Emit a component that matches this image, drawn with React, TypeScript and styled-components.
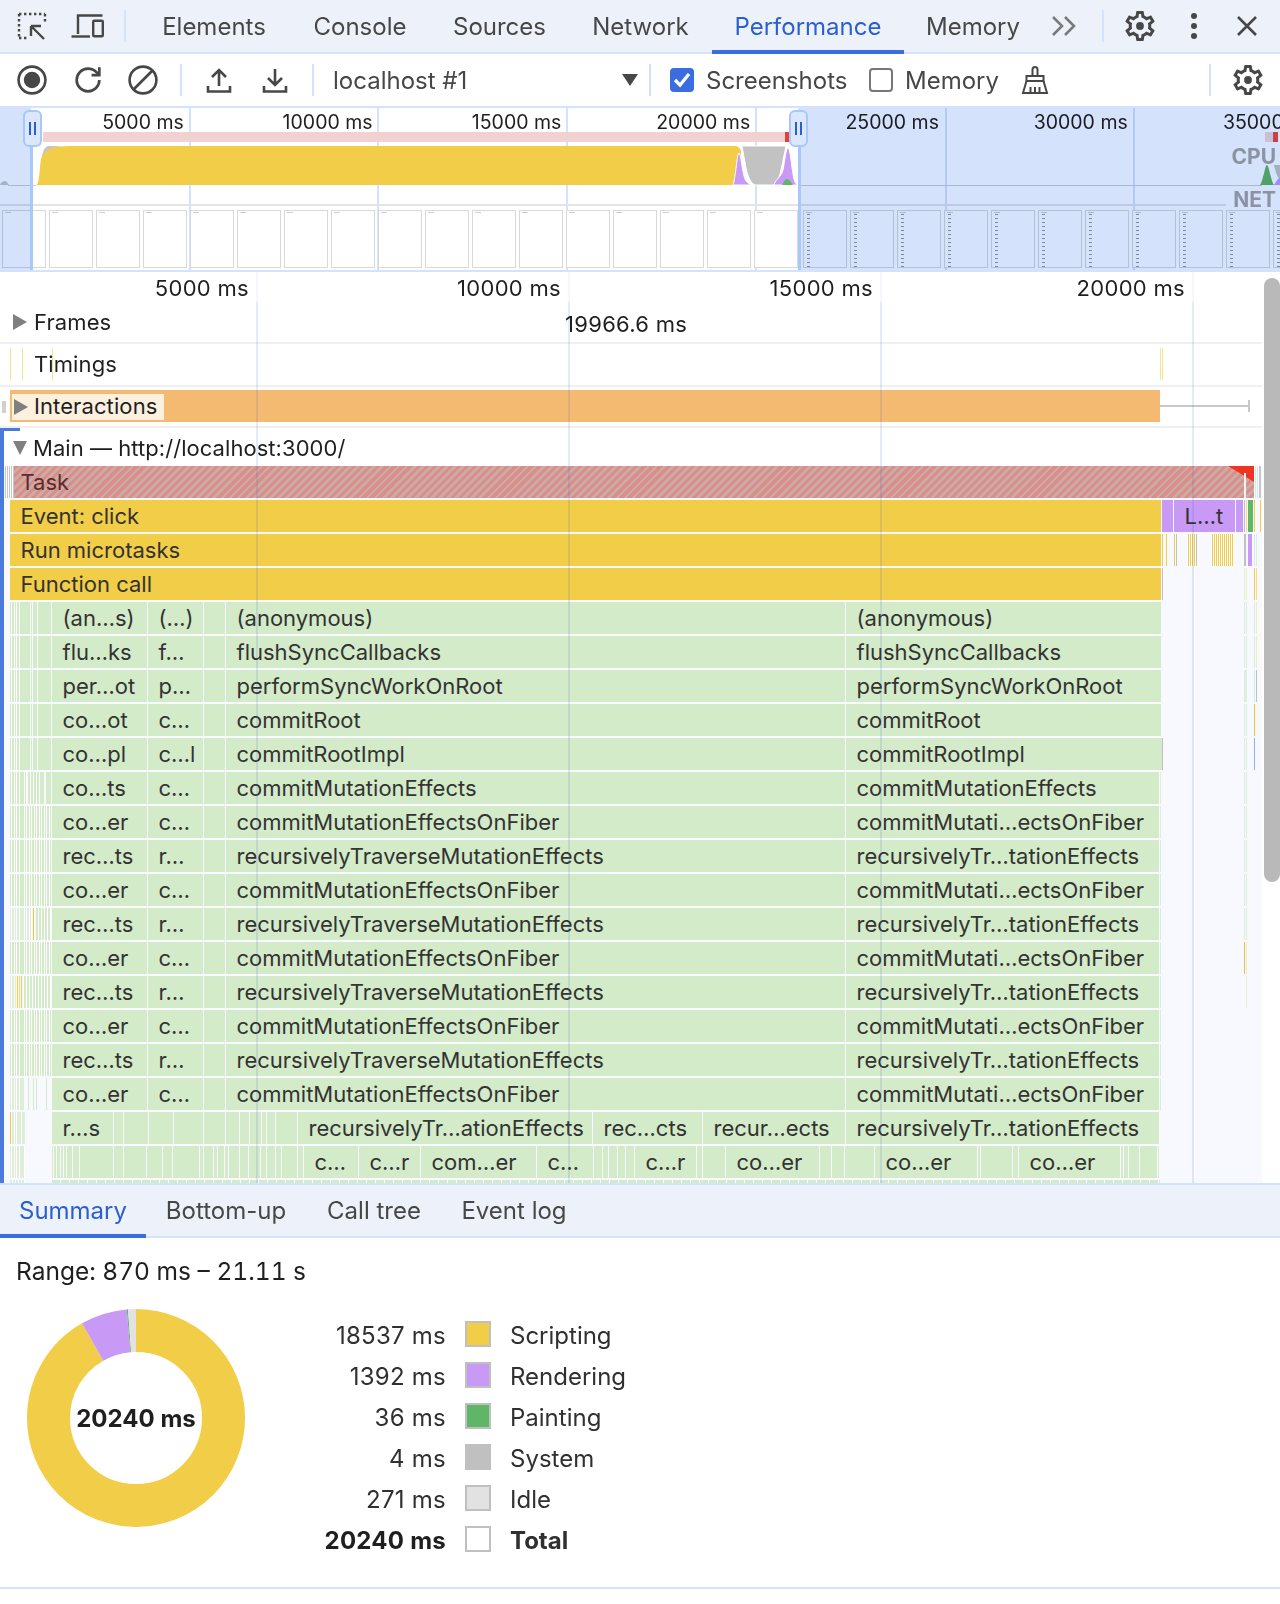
import React from "react";
import styled, { createGlobalStyle } from "styled-components";

const GlobalStyle = createGlobalStyle`
  html, body { margin: 0; padding: 0; background: #fff; }
  body { font-family: Inter, "Noto Sans", "Liberation Sans", sans-serif; color: #1f1f1f; }
  * { box-sizing: border-box; }
`;

const GREEN = "#d4ebc9";
const YELLOW = "#f2cd48";
const PURPLE = "#c899f5";
const PALE = "#dfeed8";

const Page = styled.div`
  width: 1280px;
  height: 1604px;
  overflow: hidden;
  display: flex;
  flex-direction: column;
`;

const TabBar = styled.div`
  height: 54px;
  flex: none;
  display: flex;
  align-items: center;
  background: #edf2fa;
  border-bottom: 2px solid #d3e3fd;
  padding-left: 4px;
`;

const Slot = styled.div<{ $w?: number }>`
  width: ${(p) => p.$w ?? 56}px;
  height: 100%;
  flex: none;
  display: flex;
  align-items: center;
  justify-content: center;
`;

const Sep = styled.div<{ $l: number; $r: number }>`
  width: 2px;
  height: 32px;
  flex: none;
  background: #d3e3fd;
  margin: 0 ${(p) => p.$r}px 0 ${(p) => p.$l}px;
`;

const Tab = styled.div<{ $active?: boolean; $w: number }>`
  position: relative;
  width: ${(p) => p.$w}px;
  flex: none;
  height: 100%;
  display: flex;
  align-items: center;
  justify-content: center;
  font-size: 24px;
  color: ${(p) => (p.$active ? "#2b5fd0" : "#474747")};
  ${(p) =>
    p.$active
      ? `&::after { content: ""; position: absolute; left: 0; right: 0; bottom: -2px; height: 4px; background: #3b6de0; }`
      : ""}
`;

const Toolbar = styled.div`
  height: 54px;
  flex: none;
  display: flex;
  align-items: center;
  background: #fff;
  border-bottom: 2px solid #d3e3fd;
  padding-left: 4px;
  font-size: 24px;
  color: #474747;
`;

const SelectBox = styled.div`
  width: 314px;
  flex: none;
  display: flex;
  align-items: center;
  justify-content: space-between;
  padding-left: 9px;
  padding-right: 0;
`;

const Check = styled.span<{ $on?: boolean }>`
  width: 24px;
  height: 24px;
  border-radius: 4px;
  flex: none;
  display: flex;
  align-items: center;
  justify-content: center;
  background: ${(p) => (p.$on ? "#3b6de0" : "#fff")};
  border: ${(p) => (p.$on ? "none" : "2px solid #777")};
`;

const CheckLabel = styled.span<{ $l: number; $w: number }>`
  margin-left: ${(p) => p.$l}px;
  width: ${(p) => p.$w}px;
  flex: none;
`;

const Overview = styled.div`
  height: 164px;
  flex: none;
  position: relative;
  overflow: hidden;
  border-bottom: 2px solid #d3e3fd;
`;

const OverRuler = styled.div`
  height: 24px;
  display: flex;
  font-size: 19.5px;
  color: #1f1f1f;
  line-height: 29px;
  position: relative;
`;

const OverCell = styled.div`
  flex: none;
  width: 188.8px;
  padding-right: 5px;
  text-align: right;
  white-space: nowrap;
`;

const OverChart = styled.svg`
  display: block;
  position: relative;
  width: 1280px;
  height: 72px;
`;

const GraphLabel = styled.div<{ $top: number }>`
  position: absolute;
  right: 4px;
  top: ${(p) => p.$top}px;
  font-size: 21px;
  line-height: 22px;
  font-weight: 700;
  color: #a6a6a6;
`;

const Filmstrip = styled.div`
  position: relative;
  display: flex;
  gap: 3px;
  padding-left: 2px;
  height: 66px;
  padding-top: 6px;
  &::before {
    content: "";
    position: absolute;
    left: 0;
    top: 0;
    width: 1226px;
    height: 2px;
    background: #e4e4e4;
  }
`;

const Shot = styled.div<{ $busy?: boolean; $gap?: number }>`
  position: relative;
  flex: none;
  width: 44px;
  height: 58px;
  background: #fff;
  border: 1.5px solid #d9d9d9;
  margin-left: ${(p) => p.$gap ?? 0}px;
  &::before {
    content: "";
    position: absolute;
    left: 2px;
    top: 1px;
    width: 6px;
    height: 1px;
    background: #d0d0d0;
  }
  ${(p) =>
    p.$busy
      ? `&::after { content: ""; position: absolute; left: 3px; top: 3px; bottom: 0; width: 3px;
           background: repeating-linear-gradient(180deg, #9a9a9a 0 1.5px, transparent 1.5px 4px); }`
      : ""}
`;

const OverGrid = styled.div<{ $x: number }>`
  position: absolute;
  top: 0;
  bottom: 0;
  width: 2px;
  left: ${(p) => p.$x}px;
  background: #d3e3fd;
`;

const Shade = styled.div<{ $l: number; $w: number }>`
  position: absolute;
  top: 0;
  bottom: 0;
  left: ${(p) => p.$l}px;
  width: ${(p) => p.$w}px;
  background: #d5e2fb;
  mix-blend-mode: multiply;
`;

const HandleLine = styled.div<{ $x: number }>`
  position: absolute;
  top: 36px;
  bottom: 0;
  width: 3px;
  left: ${(p) => p.$x}px;
  background: #a8c7fa;
`;

const Handle = styled.div<{ $x: number }>`
  position: absolute;
  top: 2px;
  left: ${(p) => p.$x}px;
  width: 19px;
  height: 37px;
  border-radius: 6px;
  border: 2px solid #a8c7fa;
  background: #dbe7fc;
  display: flex;
  align-items: center;
  justify-content: center;
  gap: 3px;
  &::before, &::after {
    content: "";
    width: 2px;
    height: 13px;
    background: #2b5fd0;
  }
`;

const FlamePanel = styled.div`
  height: 911px;
  flex: none;
  display: flex;
  background: #fff;
`;

const FlameContent = styled.div`
  position: relative;
  width: 1262px;
  flex: none;
  overflow: hidden;
`;

const ScrollTrack = styled.div`
  flex: 1;
  padding: 6px 0 0 2px;
`;

const ScrollThumb = styled.div`
  width: 16px;
  height: 604px;
  border-radius: 8px;
  background: #b9b9b9;
`;

const MainRuler = styled.div`
  height: 30px;
  display: flex;
  font-size: 22px;
  line-height: 33px;
  letter-spacing: 0.3px;
`;

const MainCell = styled.div<{ $w: number }>`
  flex: none;
  width: ${(p) => p.$w}px;
  padding-right: 8px;
  text-align: right;
  white-space: nowrap;
`;

const Track = styled.div<{ $h: number }>`
  position: relative;
  height: ${(p) => p.$h}px;
  display: flex;
  align-items: center;
  border-bottom: 2px solid #f0f0f0;
  font-size: 22px;
  letter-spacing: 0.1px;
  padding-left: 13px;
`;

const TrackName = styled.span<{ $l?: number; $up?: boolean }>`
  margin-left: ${(p) => p.$l ?? 6}px;
  margin-bottom: ${(p) => (p.$up ? 2 : 0)}px;
  position: relative;
`;

const Tri = styled.span<{ $down?: boolean }>`
  width: 0;
  height: 0;
  flex: none;
  ${(p) =>
    p.$down
      ? `border-left: 7.5px solid transparent; border-right: 7.5px solid transparent; border-top: 14px solid #7f7f7f; margin-right: -1px;`
      : `border-top: 8px solid transparent; border-bottom: 8px solid transparent; border-left: 14px solid #7f7f7f; margin-right: 1px;`}
`;

const FrameTime = styled.span`
  position: absolute;
  left: 565px;
  top: 9px;
  font-size: 22px;
  letter-spacing: 0.3px;
`;

const TimingTick = styled.i<{ $x: number; $w?: number }>`
  position: absolute;
  left: ${(p) => p.$x}px;
  top: 4px;
  width: ${(p) => p.$w ?? 1}px;
  height: 32px;
  background: #f6e58f;
`;

const InterBar = styled.div`
  position: absolute;
  left: 10px;
  top: 3px;
  width: 1150px;
  height: 32px;
  background: #f4ba72;
`;

const Whisker = styled.div`
  position: absolute;
  left: 1160px;
  top: 18px;
  width: 90px;
  height: 2px;
  background: #c8c8c8;
  &::after {
    content: "";
    position: absolute;
    right: 0;
    top: -5px;
    width: 2px;
    height: 12px;
    background: #c8c8c8;
  }
`;

const InterLabel = styled.div`
  position: absolute;
  left: 12px;
  top: 7px;
  width: 152px;
  height: 26px;
  background: #fcf0de;
  display: flex;
  align-items: center;
  padding-left: 2px;
`;

const GreyMark = styled.i`
  position: absolute;
  left: 2px;
  top: 14px;
  width: 4px;
  height: 12px;
  background: #d0d0d0;
`;

const MainTrack = styled.div`
  position: relative;
  height: 755px;
  border-left: 4px solid #4a7bdc;
  &::before {
    content: "";
    position: absolute;
    left: 0;
    top: 0;
    width: 16px;
    height: 3px;
    background: #4a7bdc;
  }
`;

const MainHead = styled.div`
  height: 38px;
  display: flex;
  align-items: center;
  padding-left: 9px;
  font-size: 22px;
  letter-spacing: 0.05px;
  padding-top: 1px;
`;

const Flames = styled.div`
  background: #f8f9fe;
  height: 717px;
  overflow: hidden;
`;

const FlameRow = styled.div`
  position: relative;
  display: flex;
  height: 32px;
  margin-bottom: 2px;
  font-size: 22px;
  line-height: 33px;
  color: #333;
`;

const Seg = styled.div.attrs<{ $m: number; $w: number; $bg: string }>((p) => ({
  style: { marginLeft: p.$m, width: p.$w, background: p.$bg },
}))<{ $m: number; $w: number; $bg: string; $pad: number; $ink?: string }>`
  flex: none;
  height: 100%;
  padding-left: ${(p) => p.$pad}px;
  color: ${(p) => p.$ink ?? "inherit"};
  white-space: nowrap;
  overflow: hidden;
`;

const Flag = styled.i`
  position: absolute;
  left: 1224px;
  top: 0;
  width: 26px;
  height: 16px;
  background: #ee3524;
  clip-path: polygon(0 0, 100% 0, 100% 100%);
`;

const FlagLine = styled.i`
  position: absolute;
  left: 1240px;
  top: 7px;
  bottom: 0;
  width: 2px;
  background: #f4f4f4;
`;

const FlameGrid = styled.div<{ $x: number }>`
  position: absolute;
  top: 0;
  bottom: 0;
  left: ${(p) => p.$x}px;
  width: 2px;
  pointer-events: none;
  background: linear-gradient(180deg, rgba(60, 90, 200, 0.05) 0 30px, rgba(60, 90, 200, 0.13) 30px);
`;

const BottomTabs = styled.div`
  height: 55px;
  flex: none;
  display: flex;
  align-items: center;
  background: #edf2fa;
  border-top: 2px solid #d3e3fd;
  border-bottom: 2px solid #d3e3fd;
`;

const Summary = styled.div`
  height: 351px;
  flex: none;
  padding-top: 18px;
  border-bottom: 2px solid #d3e3fd;
`;

const RangeText = styled.div`
  font-size: 24.5px;
  line-height: 30px;
  font-variant-numeric: tabular-nums;
  padding-left: 16px;
`;

const Pie = styled.div`
  display: flex;
  align-items: flex-start;
  margin-top: 23px;
  padding-left: 27px;
`;

const Donut = styled.div`
  width: 218px;
  height: 218px;
  flex: none;
  display: grid;
  place-items: center;
  & > * { grid-area: 1 / 1; }
`;

const DonutTotal = styled.b`
  font-size: 24px;
  font-weight: 700;
`;

const Legend = styled.div`
  display: grid;
  grid-template-columns: 161px 26px auto;
  grid-auto-rows: 41px;
  column-gap: 19px;
  align-items: center;
  margin-left: 40px;
  margin-top: 6px;
  font-size: 24px;
  color: #303030;
`;

const LegendValue = styled.div<{ $bold?: boolean }>`
  text-align: right;
  letter-spacing: 0.25px;
  font-weight: ${(p) => (p.$bold ? 700 : 400)};
  color: ${(p) => (p.$bold ? "#1f1f1f" : "#303030")};
`;

const Swatch = styled.div<{ $c: string }>`
  width: 26px;
  height: 26px;
  margin-top: -4px;
  background: ${(p) => p.$c};
  border: 2px solid #c0c0c0;
`;

const LegendName = styled.div<{ $bold?: boolean }>`
  font-weight: ${(p) => (p.$bold ? 700 : 400)};
`;

const ICON = "#474747";

const GearIcon = () => (
  <svg width="36" height="36" viewBox="0 0 24 24" fill={ICON}>
    <path d="M19.43 12.98c.04-.32.07-.64.07-.98 0-.34-.03-.66-.07-.98l2.11-1.65c.19-.15.24-.42.12-.64l-2-3.46c-.09-.16-.26-.25-.44-.25-.06 0-.12.01-.17.03l-2.49 1c-.52-.4-1.08-.73-1.69-.98l-.38-2.65C14.46 2.18 14.25 2 14 2h-4c-.25 0-.46.18-.49.42l-.38 2.65c-.61.25-1.17.59-1.69.98l-2.49-1c-.06-.02-.12-.03-.18-.03-.17 0-.34.09-.43.25l-2 3.46c-.13.22-.07.49.12.64l2.11 1.65c-.04.32-.07.65-.07.98 0 .33.03.66.07.98l-2.11 1.65c-.19.15-.24.42-.12.64l2 3.46c.09.16.26.25.44.25.06 0 .12-.01.17-.03l2.49-1c.52.4 1.08.73 1.69.98l.38 2.65c.03.24.24.42.49.42h4c.25 0 .46-.18.49-.42l.38-2.65c.61-.25 1.17-.59 1.69-.98l2.49 1c.06.02.12.03.18.03.17 0 .34-.09.43-.25l2-3.46c.12-.22.07-.49-.12-.64l-2.11-1.65zm-1.98-1.71c.04.31.05.52.05.73 0 .21-.02.43-.05.73l-.14 1.13.89.7 1.08.84-.7 1.21-1.27-.51-1.04-.42-.9.68c-.43.32-.84.56-1.25.73l-1.06.43-.16 1.13-.2 1.35h-1.4l-.19-1.35-.16-1.13-1.06-.43c-.43-.18-.83-.41-1.23-.71l-.91-.7-1.06.43-1.27.51-.7-1.21 1.08-.84.89-.7-.14-1.13c-.03-.31-.05-.54-.05-.74s.02-.43.05-.73l.14-1.13-.89-.7-1.08-.84.7-1.21 1.27.51 1.04.42.9-.68c.43-.32.84-.56 1.25-.73l1.06-.43.16-1.13.2-1.35h1.39l.19 1.35.16 1.13 1.06.43c.43.18.83.41 1.23.71l.91.7 1.06-.43 1.27-.51.7 1.21-1.07.85-.89.7.14 1.13z" />
    <circle cx="12" cy="12" r="2.6" />
  </svg>
);

const InspectIcon = () => (
  <svg width="30" height="28" viewBox="0 0 30 28" fill="none" stroke={ICON} strokeWidth="2.4">
    <path d="M2 2H28M2 2V26M2 26H10M28 2V10" strokeDasharray="2.4 2.6" />
    <path d="M14 14L27 27M14 14H24M14 14V24" />
  </svg>
);

const DeviceIcon = () => (
  <svg width="34" height="26" viewBox="0 0 34 26" fill="none" stroke={ICON} strokeWidth="2.4">
    <path d="M7 21V2.5H31.5" />
    <path d="M0.5 23.5H19" />
    <rect x="22.2" y="7.7" width="9.6" height="15.6" rx="1" />
  </svg>
);

const ChevronsIcon = () => (
  <svg width="26" height="22" viewBox="0 0 26 22" fill="none" stroke="#7a7a7a" strokeWidth="2.6">
    <path d="M2 2L11 11L2 20M14 2L23 11L14 20" />
  </svg>
);

const DotsIcon = () => (
  <svg width="8" height="28" viewBox="0 0 8 28" fill={ICON}>
    <circle cx="4" cy="4" r="3" />
    <circle cx="4" cy="14" r="3" />
    <circle cx="4" cy="24" r="3" />
  </svg>
);

const CloseIcon = () => (
  <svg width="22" height="22" viewBox="0 0 22 22" fill="none" stroke={ICON} strokeWidth="2.6">
    <path d="M2 2L20 20M20 2L2 20" />
  </svg>
);

const RecordIcon = () => (
  <svg width="30" height="30" viewBox="0 0 30 30" fill="none" stroke={ICON} strokeWidth="2.6">
    <circle cx="15" cy="15" r="13.4" />
    <circle cx="15" cy="15" r="8.2" fill={ICON} stroke="none" />
  </svg>
);

const ReloadIcon = () => (
  <svg width="32" height="32" viewBox="0 0 24 24" fill="none" stroke={ICON} strokeWidth="2">
    <path d="M20.5 12a8.5 8.5 0 1 1-8.5-8.5c2.5 0 4.7 1 6.4 2.7L20.5 8" />
    <path d="M20.5 2.5v5.8h-5.8" />
  </svg>
);

const ClearIcon = () => (
  <svg width="30" height="30" viewBox="0 0 30 30" fill="none" stroke={ICON} strokeWidth="2.6">
    <circle cx="15" cy="15" r="13.4" />
    <path d="M5.5 24.5L24.5 5.5" />
  </svg>
);

const UploadIcon = () => (
  <svg width="26" height="26" viewBox="0 0 26 26" fill="none" stroke={ICON} strokeWidth="2.6">
    <path d="M13 19V3M6 10L13 3L20 10" />
    <path d="M2 19V24.5H24V19" />
  </svg>
);

const DownloadIcon = () => (
  <svg width="26" height="26" viewBox="0 0 26 26" fill="none" stroke={ICON} strokeWidth="2.6">
    <path d="M13 2V18M6 11L13 18L20 11" />
    <path d="M2 19V24.5H24V19" />
  </svg>
);

const BroomIcon = () => (
  <svg width="28" height="28" viewBox="0 0 28 28" fill="none" stroke={ICON} strokeWidth="2">
    <path d="M11.5 10V3.5a2.5 2.5 0 0 1 5 0V10" />
    <path d="M5.5 10H22.5V15H5.5z" />
    <path d="M5.5 15L2 27H26L22.5 15" />
    <path d="M9.5 21V27M14 21V27M18.5 21V27" />
  </svg>
);

const TickIcon = () => (
  <svg width="18" height="16" viewBox="0 0 18 16" fill="none" stroke="#fff" strokeWidth="3.2">
    <path d="M2 8L7 13L16 2" />
  </svg>
);

const SelectCaret = () => (
  <svg width="16" height="12" viewBox="0 0 16 12" fill={ICON}>
    <path d="M0 0H16L8 12z" />
  </svg>
);

const OverviewGraph = () => (
  <OverChart viewBox="0 0 1280 72">
    <rect x="43" y="0" width="743" height="10" fill="#f2d2d0" />
    <rect x="785" y="0" width="5" height="10" fill="#e5403a" />
    <rect x="1265" y="0" width="8" height="10" fill="#f0d8dc" />
    <rect x="1273" y="0" width="5" height="10" fill="#ee4a44" />
    <path d="M8 53.5H36" stroke="#cfcfcf" strokeWidth="1" />
    <path d="M800 53.5H1262" stroke="#cfcfcf" strokeWidth="1" />
    <path d="M0 53C1 50 3 49 5 49C6 49 8 51 9 53z" fill="#c8c8c8" />
    <path d="M36 53C38 53 39 48 40 35C41 24 43 19 47 17C53 15 62 14 72 14H735C738 14 740 16 741 19L741 30L733 53z" fill={YELLOW} />
    <path d="M42 24C43 18 45 15 48 14H62C54 15 47 17 42 24z" fill="#c6c6c6" />
    <path d="M733 53C736 44 737 21 739 21C741 21 742 42 746 49C748 52 752 53 754 53z" fill={PURPLE} stroke="#fff" strokeWidth="1" />
    <path d="M742 14H786L781 38C779 48 776 53 772 53H756C752 53 748 46 746 36z" fill="#c2c2c2" stroke="#fff" strokeWidth="1" />
    <path d="M774 53C776 46 781 46 783 38C785 28 786 16 788 16C790 16 791 30 793 42C794 50 796 53 799 53z" fill={PURPLE} stroke="#fff" strokeWidth="1" />
    <path d="M782 53C784 50 785 47 787 47C789 47 791 50 793 53z" fill="#5eb666" />
    <path d="M1260 53C1263 50 1265 33 1267 33C1269 33 1271 50 1274 53z" fill="#5eb666" />
    <path d="M1274 33C1276 42 1278 46 1280 48V33z" fill="#c6c6c6" />
    <path d="M1274 53C1276 50 1278 46 1280 46V53z" fill={PURPLE} />
  </OverChart>
);

type S = { x: number; e: number; c?: string; t?: string; p?: number; ink?: string };

const stripe = (step: number, c = GREEN) =>
  `repeating-linear-gradient(90deg, ${c} 0 ${step - 1}px, #fff ${step - 1}px ${step}px)`;

const renderSegs = (segs: S[]) => {
  let cur = 4;
  return segs.map((s, i) => {
    const m = s.x - cur;
    cur = s.e;
    return (
      <Seg key={i} $m={m} $w={s.e - s.x} $bg={s.c ?? GREEN} $pad={s.t ? s.p ?? 10.5 : 0} $ink={s.ink}>
        {s.t}
      </Seg>
    );
  });
};

const cut = (list: number[], labels: Record<number, string> = {}, c?: string): S[] =>
  list.slice(0, -1).map((x, i) => ({ x, e: list[i + 1] - 1, c, t: labels[x] }));

const leftA: S[] = [
  { x: 10, e: 24, c: stripe(2.5) },
  { x: 24, e: 30, c: GREEN },
  { x: 31, e: 32, c: GREEN },
  { x: 33, e: 37, c: GREEN },
  { x: 38, e: 51, c: GREEN },
];
const leftB: S[] = [
  { x: 10, e: 27, c: stripe(2.5) },
  { x: 28, e: 39, c: stripe(3) },
  { x: 40, e: 44 },
  { x: 46, e: 51 },
];
const leftC: S[] = [{ x: 10, e: 51, c: stripe(2.5) }];
const leftD: S[] = [
  { x: 10, e: 32, c: stripe(2.5, PALE) },
  { x: 33, e: 34, c: "#f0c040" },
  { x: 36, e: 51, c: stripe(3) },
];
const leftE: S[] = [
  { x: 10, e: 16, c: stripe(2.5, PALE) },
  { x: 17, e: 18, c: YELLOW },
  { x: 19, e: 20, c: "#f5dd85" },
  { x: 21, e: 22, c: YELLOW },
  { x: 24, e: 51, c: stripe(3) },
];
const leftF: S[] = [
  { x: 10, e: 24, c: stripe(2.5, PALE) },
  { x: 28, e: 29 },
  { x: 33, e: 34 },
  { x: 36, e: 37 },
  { x: 46, e: 47 },
];

const tickA: S[] = [
  { x: 1244, e: 1245, c: PALE },
  { x: 1246, e: 1247, c: PALE },
  { x: 1254, e: 1255, c: "#cfeee8" },
  { x: 1256, e: 1257, c: "#eef0b0" },
];
const tickG: S[] = [
  { x: 1244, e: 1245, c: PALE },
  { x: 1246, e: 1247, c: PALE },
];

type RowDef = {
  a: string;
  b: string;
  c: string;
  d: string;
  left: S[];
  end: number;
  right: S[];
};

const rowDefs: RowDef[] = [
  { a: "(an…s)", b: "(…)", c: "(anonymous)", d: "(anonymous)", left: leftA, end: 1161, right: tickA },
  { a: "flu…ks", b: "f…", c: "flushSyncCallbacks", d: "flushSyncCallbacks", left: leftA, end: 1161, right: tickA },
  { a: "per…ot", b: "p…", c: "performSyncWorkOnRoot", d: "performSyncWorkOnRoot", left: leftA, end: 1161, right: [{ x: 1244, e: 1247, c: PALE }, { x: 1254, e: 1255, c: "#cfeee8" }, { x: 1256, e: 1257, c: "#c0c0c0" }] },
  { a: "co…ot", b: "c…", c: "commitRoot", d: "commitRoot", left: leftA, end: 1161, right: [...tickG, { x: 1254, e: 1255, c: "#f2c230" }] },
  { a: "co…pl", b: "c…l", c: "commitRootImpl", d: "commitRootImpl", left: leftA, end: 1162, right: [{ x: 1162, e: 1163, c: "#c0c0c0" }, ...tickG, { x: 1254, e: 1255, c: "#8ab0f0" }] },
  { a: "co…ts", b: "c…", c: "commitMutationEffects", d: "commitMutationEffects", left: leftB, end: 1159, right: [{ x: 1160, e: 1161, c: PALE }, ...tickG] },
  { a: "co…er", b: "c…", c: "commitMutationEffectsOnFiber", d: "commitMutati…ectsOnFiber", left: leftC, end: 1159, right: [{ x: 1160, e: 1161, c: PALE }, ...tickG] },
  { a: "rec…ts", b: "r…", c: "recursivelyTraverseMutationEffects", d: "recursivelyTr…tationEffects", left: leftC, end: 1159, right: [{ x: 1160, e: 1161, c: "#cfeee8" }, ...tickG] },
  { a: "co…er", b: "c…", c: "commitMutationEffectsOnFiber", d: "commitMutati…ectsOnFiber", left: leftC, end: 1159, right: [{ x: 1160, e: 1161, c: "#cfeee8" }, ...tickG] },
  { a: "rec…ts", b: "r…", c: "recursivelyTraverseMutationEffects", d: "recursivelyTr…tationEffects", left: leftD, end: 1159, right: [{ x: 1160, e: 1161, c: "#cfeee8" }, ...tickG] },
  { a: "co…er", b: "c…", c: "commitMutationEffectsOnFiber", d: "commitMutati…ectsOnFiber", left: leftC, end: 1159, right: [{ x: 1160, e: 1161, c: "#cfeee8" }, { x: 1244, e: 1245, c: "#f2c230" }, { x: 1246, e: 1247, c: PALE }] },
  { a: "rec…ts", b: "r…", c: "recursivelyTraverseMutationEffects", d: "recursivelyTr…tationEffects", left: leftE, end: 1159, right: [{ x: 1160, e: 1161, c: "#cfeee8" }, { x: 1246, e: 1247, c: PALE }] },
  { a: "co…er", b: "c…", c: "commitMutationEffectsOnFiber", d: "commitMutati…ectsOnFiber", left: leftC, end: 1159, right: [{ x: 1160, e: 1161, c: "#cfeee8" }] },
  { a: "rec…ts", b: "r…", c: "recursivelyTraverseMutationEffects", d: "recursivelyTr…tationEffects", left: leftC, end: 1159, right: [{ x: 1160, e: 1161, c: "#cfeee8" }] },
  { a: "co…er", b: "c…", c: "commitMutationEffectsOnFiber", d: "commitMutati…ectsOnFiber", left: leftF, end: 1159, right: [{ x: 1160, e: 1161, c: "#cfeee8" }] },
];

const row1112: S[] = [
  { x: 10, e: 11, c: YELLOW },
  { x: 12, e: 25, c: stripe(2.5, PALE) },
  ...cut(
    [52, 114, 124, 149, 174, 204, 226, 240, 250, 262, 267, 276, 298, 593, 703, 846, 1160],
    { 52: "r…s", 298: "recursivelyTr…ationEffects", 593: "rec…cts", 703: "recur…ects", 846: "recursivelyTr…tationEffects" },
  ),
];

const row1146: S[] = [
  { x: 10, e: 25, c: stripe(2.5, PALE) },
  ...cut(
    [52, 54, 57, 61, 64, 67, 73, 80, 114, 124, 147, 163, 173, 200, 204, 214, 218, 225, 229, 240, 249, 261, 267, 276, 282, 298, 304, 359, 421, 537, 594, 603, 609, 618, 626, 635, 697, 703, 726, 820, 832, 845, 875, 978, 981, 1013, 1019, 1121, 1124, 1129, 1140, 1158, 1160],
    { 304: "c…", 359: "c…r", 421: "com…er", 537: "c…", 635: "c…r", 726: "co…er", 875: "co…er", 1019: "co…er" },
  ),
];

const eventSegs: S[] = [
  { x: 10, e: 1161, c: YELLOW, t: "Event: click" },
  { x: 1162, e: 1173, c: PURPLE },
  { x: 1174, e: 1235, c: PURPLE, t: "L…t" },
  { x: 1236, e: 1243, c: PURPLE },
  { x: 1244, e: 1245, c: "#c0c0c0" },
  { x: 1246, e: 1247, c: "#f5dd85" },
  { x: 1248, e: 1253, c: "#5eb666" },
  { x: 1254, e: 1255, c: YELLOW },
  { x: 1260, e: 1261, c: YELLOW },
];

const runSegs: S[] = [
  { x: 10, e: 1161, c: YELLOW, t: "Run microtasks" },
  { x: 1162, e: 1163, c: YELLOW },
  { x: 1166, e: 1167, c: YELLOW },
  { x: 1174, e: 1175, c: YELLOW },
  { x: 1176, e: 1177, c: "#c0c0c0" },
  { x: 1188, e: 1196, c: stripe(2, YELLOW) },
  { x: 1196, e: 1197, c: "#c0c0c0" },
  { x: 1212, e: 1233, c: stripe(2, YELLOW) },
  { x: 1244, e: 1246, c: "#c0c0c0" },
  { x: 1248, e: 1252, c: PURPLE },
  { x: 1254, e: 1255, c: "#cfeee8" },
  { x: 1256, e: 1257, c: PALE },
];

const funcSegs: S[] = [
  { x: 10, e: 1161, c: YELLOW, t: "Function call" },
  { x: 1162, e: 1163, c: "#c0c0c0" },
  { x: 1244, e: 1245, c: PALE },
  { x: 1246, e: 1247, c: "#e8f0c0" },
  { x: 1254, e: 1255, c: YELLOW },
  { x: 1256, e: 1257, c: "#f5dd85" },
];

const taskSegs: S[] = [
  { x: 5, e: 14, c: stripe(2, "#c8c8c8") },
  {
    x: 14,
    e: 1254,
    c: "repeating-linear-gradient(135deg, #dc8d88 0 3px, #c9aca8 3px 5.7px)",
    t: "Task",
    p: 6.5,
    ink: "#5f2c2c",
  },
  { x: 1255, e: 1256, c: "#cfeee8" },
  { x: 1257, e: 1258, c: "#cfeee8" },
  { x: 1259, e: 1261, c: "#c8c8c8" },
];

const DONUT = [
  { v: 18537, c: YELLOW },
  { v: 1392, c: PURPLE },
  { v: 36, c: "#5eb666" },
  { v: 4, c: "#c0c0c0" },
  { v: 271, c: "#e2e2e2" },
];
const TOTAL = 20240;

const DonutChart = () => {
  const r = 87.5;
  const circ = 2 * Math.PI * r;
  let acc = 0;
  return (
    <svg width="218" height="218" viewBox="0 0 218 218">
      <g transform="rotate(-90 109 109)">
        {DONUT.map((d) => {
          const len = (d.v / TOTAL) * circ;
          const el = (
            <circle
              key={d.c}
              cx="109"
              cy="109"
              r={r}
              fill="none"
              stroke={d.c}
              strokeWidth="43"
              strokeDasharray={`${len} ${circ - len}`}
              strokeDashoffset={-acc}
            />
          );
          acc += len;
          return el;
        })}
      </g>
    </svg>
  );
};

const LEGEND = [
  { v: "18537 ms", c: YELLOW, n: "Scripting" },
  { v: "1392 ms", c: PURPLE, n: "Rendering" },
  { v: "36 ms", c: "#5eb666", n: "Painting" },
  { v: "4 ms", c: "#c0c0c0", n: "System" },
  { v: "271 ms", c: "#e2e2e2", n: "Idle" },
  { v: "20240 ms", c: "#fff", n: "Total", bold: true },
];

const shots = Array.from({ length: 17 }, (_, i) => i);
const busyShots = Array.from({ length: 11 }, (_, i) => i);

export default function App() {
  return (
    <Page>
      <GlobalStyle />
      <TabBar>
        <Slot><InspectIcon /></Slot>
        <Slot><DeviceIcon /></Slot>
        <Sep $l={8} $r={12} />
        <Tab $w={152}>Elements</Tab>
        <Tab $w={140}>Console</Tab>
        <Tab $w={139}>Sources</Tab>
        <Tab $w={143}>Network</Tab>
        <Tab $w={192} $active>Performance</Tab>
        <Tab $w={138}>Memory</Tab>
        <Slot $w={43}><ChevronsIcon /></Slot>
        <Sep $l={17} $r={8} />
        <Slot $w={55}><GearIcon /></Slot>
        <Slot $w={54}><DotsIcon /></Slot>
        <Slot $w={52}><CloseIcon /></Slot>
      </TabBar>
      <Toolbar>
        <Slot><RecordIcon /></Slot>
        <Slot><ReloadIcon /></Slot>
        <Slot $w={54}><ClearIcon /></Slot>
        <Sep $l={10} $r={9} />
        <Slot $w={56}><UploadIcon /></Slot>
        <Slot $w={56}><DownloadIcon /></Slot>
        <Sep $l={9} $r={10} />
        <SelectBox>
          <span>localhost #1</span>
          <SelectCaret />
        </SelectBox>
        <Sep $l={11} $r={19} />
        <Check $on><TickIcon /></Check>
        <CheckLabel $l={12} $w={163}>Screenshots</CheckLabel>
        <Check />
        <CheckLabel $l={12} $w={116}>Memory</CheckLabel>
        <Slot $w={28}><BroomIcon /></Slot>
        <Sep $l={160} $r={14} />
        <Slot $w={46}><GearIcon /></Slot>
      </Toolbar>
      <Overview>
        {[189, 377, 566, 755, 945, 1133].map((x) => <OverGrid key={x} $x={x} />)}
        <OverRuler>
          {["5000", "10000", "15000", "20000", "25000", "30000", "35000"].map((t) => (
            <OverCell key={t}>{t} ms</OverCell>
          ))}
        </OverRuler>
        <OverviewGraph />
        <Filmstrip>
          {shots.map((i) => <Shot key={i} />)}
          {busyShots.map((i) => <Shot key={i} $busy $gap={i === 0 ? 2 : 0} />)}
        </Filmstrip>
        <GraphLabel $top={38}>CPU</GraphLabel>
        <GraphLabel $top={81}>NET</GraphLabel>
        <Shade $l={0} $w={31} />
        <Shade $l={798} $w={482} />
        <HandleLine $x={30} />
        <HandleLine $x={798} />
        <Handle $x={23} />
        <Handle $x={789} />
      </Overview>
      <FlamePanel>
        <FlameContent>
          <MainRuler>
            <MainCell $w={257}>5000 ms</MainCell>
            <MainCell $w={312}>10000 ms</MainCell>
            <MainCell $w={312}>15000 ms</MainCell>
            <MainCell $w={312}>20000 ms</MainCell>
          </MainRuler>
          <Track $h={42}>
            <Tri />
            <TrackName>Frames</TrackName>
            <FrameTime>19966.6 ms</FrameTime>
          </Track>
          <Track $h={43}>
            <TimingTick $x={10} />
            <TimingTick $x={22} />
            <TimingTick $x={52} />
            <TimingTick $x={1160} />
            <TimingTick $x={1162} />
            <TrackName $l={21} $up>Timings</TrackName>
          </Track>
          <Track $h={41}>
            <GreyMark />
            <InterBar />
            <Whisker />
            <InterLabel>
              <Tri />
              <TrackName $l={5} $up>Interactions</TrackName>
            </InterLabel>
          </Track>
          <MainTrack>
            <MainHead>
              <Tri $down />
              <TrackName $l={7}>Main — http://localhost:3000/</TrackName>
            </MainHead>
            <Flames>
              <FlameRow>
                {renderSegs(taskSegs)}
                <Flag />
                <FlagLine />
              </FlameRow>
              <FlameRow>{renderSegs(eventSegs)}</FlameRow>
              <FlameRow>{renderSegs(runSegs)}</FlameRow>
              <FlameRow>{renderSegs(funcSegs)}</FlameRow>
              {rowDefs.map((r, i) => (
                <FlameRow key={i}>
                  {renderSegs([
                    ...r.left,
                    { x: 52, e: 147, t: r.a },
                    { x: 148, e: 203, t: r.b },
                    { x: 204, e: 225 },
                    { x: 226, e: 845, t: r.c },
                    { x: 846, e: r.end, t: r.d },
                    ...r.right,
                  ])}
                </FlameRow>
              ))}
              <FlameRow>{renderSegs(row1112)}</FlameRow>
              <FlameRow>{renderSegs(row1146)}</FlameRow>
              <FlameRow>{renderSegs([{ x: 10, e: 25, c: stripe(3, PALE) }, { x: 52, e: 1160, c: stripe(9) }])}</FlameRow>
            </Flames>
          </MainTrack>
          {[257, 569, 881, 1193].map((x) => <FlameGrid key={x} $x={x - 1} />)}
        </FlameContent>
        <ScrollTrack><ScrollThumb /></ScrollTrack>
      </FlamePanel>
      <BottomTabs>
        <Tab $w={146} $active>Summary</Tab>
        <Tab $w={160}>Bottom-up</Tab>
        <Tab $w={136}>Call tree</Tab>
        <Tab $w={144}>Event log</Tab>
      </BottomTabs>
      <Summary>
        <RangeText>Range: 870 ms – 21.11 s</RangeText>
        <Pie>
          <Donut>
            <DonutChart />
            <DonutTotal>20240 ms</DonutTotal>
          </Donut>
          <Legend>
            {LEGEND.map((l) => (
              <React.Fragment key={l.n}>
                <LegendValue $bold={l.bold}>{l.v}</LegendValue>
                <Swatch $c={l.c} />
                <LegendName $bold={l.bold}>{l.n}</LegendName>
              </React.Fragment>
            ))}
          </Legend>
        </Pie>
      </Summary>
    </Page>
  );
}
